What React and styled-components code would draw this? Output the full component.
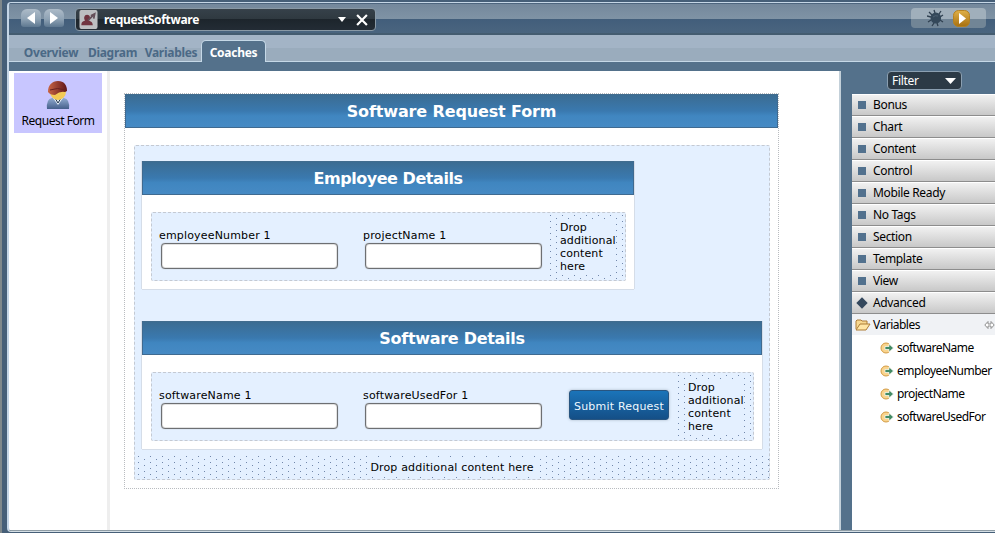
import React from "react";
import styled, { createGlobalStyle, css } from "styled-components";

const Global = createGlobalStyle`
  *{box-sizing:border-box}
  html,body{margin:0;padding:0;height:533px;overflow:hidden;background:#fff}
  body{font-family:"Noto Sans","Open Sans",sans-serif;font-size:12px;color:#000}
  svg{flex:none}
`;

const Desktop = styled.div`
  width:995px;height:533px;overflow:hidden;
  background:linear-gradient(90deg,#7f888b 0 2px,#465f78 2px);
  padding:2px 0 0 7px;
`;
const AppFrame = styled.div`
  height:530px;border:1px solid #c5d6e6;border-right:0;border-left-width:2px;
  border-bottom-color:#d5dfe5;border-radius:4px 0 0 4px;overflow:hidden;background:#54718b;
  display:flex;flex-direction:column;
`;
const TitleBar = styled.header`
  height:32px;flex:none;display:flex;align-items:flex-start;padding:5px 9px 0 12px;
  background:linear-gradient(#4d657e 0 1px,#74889c 1px,#7f93a5 16px,#425e7b 16px,#4a657f 30px,#445c70 30px);
`;
const NavButton = styled.button`
  width:20px;height:18px;padding:0;margin:1px 3px 0 0;border:0;border-radius:6px 6px 3px 3px;
  background:linear-gradient(#adbbc8,#8fa3b5 55%,#5e7890);
  display:flex;align-items:center;justify-content:center;
`;
const DocPicker = styled.div`
  width:301px;height:23px;margin-left:8px;border:1px solid #8999a6;border-radius:4px;
  background:linear-gradient(#36414a,#2f3940 48%,#1d252c 50%,#232c35);
  display:flex;align-items:center;color:#fff;padding:0 7px 0 3px;
`;
const DocName = styled.span`
  flex:1;padding-left:6px;font-weight:700;font-size:12px;line-height:20px;letter-spacing:-0.32px;
`;
const DropArrow = styled.svg`margin-right:10px;`;
const RunTools = styled.div`
  margin-left:auto;width:75px;height:20px;border-radius:4px;
  background:linear-gradient(#a0afbb 0 11px,#718596 11px);
  display:flex;align-items:center;padding-left:16px;gap:9px;
`;
const TabStrip = styled.nav`
  height:27px;flex:none;display:flex;align-items:flex-end;padding-left:9px;
  background:linear-gradient(#a3b4c6 0 13px,#9aacbd 13px);border-bottom:1px solid #c5d8e7;
`;
const Tab = styled.a`
  width:${p => p.$w}px;height:20px;line-height:23px;text-align:center;white-space:nowrap;
  font-size:12px;font-weight:700;letter-spacing:-0.28px;color:#4b6986;
  ${p => p.$active && css`
    height:22px;line-height:23px;color:#fff;background:#54718b;margin-bottom:-1px;
    border:1px solid #c5d8e7;border-bottom:0;border-radius:5px 5px 0 0;
  `}
`;
const Workspace = styled.main`
  flex:1;min-height:0;display:flex;padding-top:9px;border-bottom:1px solid #8f9da6;
`;
const CoachList = styled.aside`
  width:101px;background:#fff;border-right:3px solid #eee;padding:2px 5px;
`;
const CoachItem = styled.div`
  width:88px;height:60px;background:#c8c6ff;display:flex;flex-direction:column;align-items:center;
  padding-top:8px;white-space:nowrap;
`;
const CoachLabel = styled.span`font-size:12px;line-height:17px;margin-top:2px;letter-spacing:-0.48px;`;

const Canvas = styled.section`
  width:731px;background:#fff;border-right:2px solid #c3d0d9;padding:22px 0 0 14px;
  font-family:"DejaVu Sans",sans-serif;font-size:11px;letter-spacing:.17px;
`;
const Form = styled.div`
  width:655px;height:396px;border:1px dotted #b9bcc0;padding-bottom:8px;
`;
const Heading = styled.h2`
  margin:0;height:34px;border:1px solid #3f6a90;border-top-color:#416c8e;
  background:linear-gradient(#3b6c92,#3a79af 50%,#4086c0 65%,#468ac4);
  color:#fff;font-size:16px;font-weight:700;line-height:33px;text-align:center;
  letter-spacing:${p => p.$track}px;
`;
const VerticalGroup = styled.div`
  width:636px;height:335px;margin:17px 0 0 9px;border:1px dashed #c4c9d2;border-radius:2px;
  background:#e4f0ff;padding:15px 7px 0;display:flex;flex-direction:column;align-items:flex-start;
`;
const Section = styled.div`
  width:${p => p.$w}px;height:128px;flex:none;background:#fff;margin-bottom:${p => p.$gap}px;
  box-shadow:-1px 0 #d5dde8,1px 0 #d5dde8,0 1px #d5dde8;
`;
const FieldRow = styled.div`
  margin:17px 8px 0 9px;height:69px;border:1px dashed #c4c9d2;border-radius:2px;
  background:#e4f0ff;display:flex;
`;
const Field = styled.label`
  width:204px;padding:16px 0 0 7px;line-height:13px;display:block;font-size:11px;white-space:nowrap;
  &:first-child{flex:none}
`;
const TextBox = styled.input`
  display:block;width:177px;height:26px;margin:1px 0 0 2px;border:1px solid #6d6f72;border-radius:4px;
  background:#fff;outline:0;box-shadow:inset 0 0 0 1px #e2e2e2,0 0 1px #9a9a9a;
`;
const SubmitButton = styled.button`
  width:100px;height:30px;flex:none;margin:17px 0 0 9px;padding:2px 0 0;border:1px solid #285580;border-radius:3px;
  background:linear-gradient(#1b74b9,#144f87);box-shadow:0 0 3px #a9b7c5;color:#eef8ff;
  font-family:"DejaVu Sans",sans-serif;font-size:11px;letter-spacing:.2px;white-space:nowrap;
`;
const dots = css`
  background-image:
    radial-gradient(circle at ${p => p.$dotX}px 2.5px,#7187ab 0.6px,transparent 0.8px),
    radial-gradient(circle at ${p => p.$dotX + 6}px 5.5px,#7187ab 0.6px,transparent 0.8px);
  background-size:12px 6px;
`;
const DropCell = styled.div`
  width:76px;flex:none;margin-left:auto;padding:7px 8px;${dots}
  span{display:block;width:59px;height:54px;padding:1px 0 0 3px;background:#e4f0ff;line-height:13px;letter-spacing:.1px}
`;
const DropBar = styled.div`
  width:634px;height:25px;margin-left:-7px;display:flex;justify-content:center;align-items:center;${dots}
  span{background:#e4f0ff;padding:2px 2px 0;line-height:14px}
`;

const Palette = styled.aside`
  flex:1;display:flex;flex-direction:column;padding-left:11px;min-width:0;
`;
const FilterButton = styled.button`
  width:75px;height:19px;margin:0 0 4px 35px;padding:0 5px 0 4px;border:1px solid #8b9fb1;border-radius:4px;
  background:#2c3a46;color:#fff;font:12px/15px "Noto Sans",sans-serif;letter-spacing:-.3px;
  display:flex;align-items:center;justify-content:space-between;
`;
const Category = styled.div`
  height:22px;flex:none;display:flex;align-items:center;padding:0 0 1px 6px;gap:7px;
  border-top:1px solid #fff;border-bottom:1px solid #8d8d8d;
  background:linear-gradient(#f1f1f1,#c8c8c8);line-height:18px;letter-spacing:-0.34px;
`;
const Marker = styled.i`
  width:8px;height:8px;background:${p => (p.$open ? "#34485d" : "#52718e")};
  transform:${p => (p.$open ? "rotate(45deg)" : "none")};
`;
const FolderRow = styled.div`
  height:21px;flex:none;background:#f0f2f5;display:flex;align-items:center;padding-left:3px;gap:2px;
  span{flex:1;letter-spacing:-0.5px}
`;
const VariableList = styled.ul`
  flex:1;margin:0;padding:1px 0 0 28px;list-style:none;background:#fff;
`;
const Variable = styled.li`
  height:23px;display:flex;align-items:center;gap:3px;white-space:nowrap;letter-spacing:-0.52px;
`;
const PaletteBody = styled.div`
  flex:1;background:#fff;display:flex;flex-direction:column;min-height:0;
`;

const Triangle = ({ dir }) => (
  <svg width="10" height="12" viewBox="0 0 10 12"><path d={dir === "left" ? "M9 0V12L1 6Z" : "M1 0V12L9 6Z"} fill="#fff" /></svg>
);
const CoachIcon = () => (
  <svg width="19" height="19" viewBox="0 0 19 20">
    <rect width="19" height="20" rx="2" fill="#bdbfc2" />
    <path d="M2 16c0-4 2-4 4-5-2-2-1-6 2-6s4 3 2 6c1 1 4 1 4 5Z" fill="#703440" />
    <path d="M9 11l7-7M12 6l4-2-1 5" stroke="#65505a" strokeWidth="1.8" fill="none" />
  </svg>
);
const BugIcon = () => (
  <svg width="17" height="18" viewBox="0 0 17 18">
    <path d="M5 6L2 3M8 4L7 1M12 5l2-3M4 8L0 7M4 11l-3 2M7 14l-2 3M10 14l1 3M13 11l3 2M13 8l3-2" stroke="#304151" strokeWidth="1.3" />
    <ellipse cx="8.8" cy="9" rx="5.3" ry="5.5" fill="#34485a" /><path d="M6 8q2-2 5-1" stroke="#4d6173" fill="none" />
  </svg>
);
const RunIcon = () => (
  <svg width="17" height="17" viewBox="0 0 17 17">
    <defs><linearGradient id="run" x2="0" y2="1"><stop stopColor="#dfb048" /><stop offset="1" stopColor="#a8700f" /></linearGradient></defs>
    <rect x=".5" y=".5" width="16" height="16" rx="5" fill="url(#run)" stroke="#b58220" /><path d="M6 3l7 5.500L6 14Z" fill="#fff" />
  </svg>
);
const PersonIcon = () => (
  <svg width="24" height="29" viewBox="0 0 24 29">
    <defs>
      <linearGradient id="body" x2="0" y2="1"><stop stopColor="#91abd0" /><stop offset="1" stopColor="#455f8b" /></linearGradient>
      <linearGradient id="cap"><stop stopColor="#c96545" /><stop offset="1" stopColor="#5f1518" /></linearGradient>
    </defs>
    <path d="M1 28q-1-10 5-11h12q6 1 5 11Z" fill="url(#body)" /><path d="M7 17l5 7 5-7Z" fill="#e5edf2" /><path d="M9 17l3 5 3-5" stroke="#24364e" fill="none" />
    <ellipse cx="12" cy="10.500" rx="8" ry="8.500" fill="#f3ca55" />
    <path d="M2 11C2 4 6 0 12 0s9 4 9 10l-2 1q-5-1-10 3-5 0-7-3Z" fill="url(#cap)" /><path d="M4 9q7-3 16 0" stroke="#66221f" fill="none" />
  </svg>
);
const FolderIcon = () => (
  <svg width="16" height="13" viewBox="0 0 16 13">
    <path d="M1 11V3l1-1h4l1 1h5v3" fill="#f7d890" stroke="#ad7d36" /><path d="M1 12L5 6h10l-4 6Z" fill="#ffe6a5" stroke="#ad7d36" />
  </svg>
);
const VariableIcon = () => (
  <svg width="14" height="12" viewBox="0 0 14 12">
    <circle cx="6" cy="6" r="5" fill="#f9d48e" stroke="#d39b42" /><path d="M5 4.500h4V2l4.500 4L9 10V7.500H5Z" fill="#438b65" stroke="#fff" strokeWidth=".7" />
  </svg>
);
const ExpandIcon = () => (
  <svg width="11" height="8" viewBox="0 0 11 8"><path d="M4 .5L.8 4 4 7.500V5H7V7.500L10.2 4 7 .5V3H4Z" fill="#fff" stroke="#8d8d8d" /></svg>
);

const categories = ["Bonus", "Chart", "Content", "Control", "Mobile Ready", "No Tags", "Section", "Template", "View"];
const variables = ["softwareName", "employeeNumber", "projectName", "softwareUsedFor"];

const DropTarget = () => <DropCell $dotX={1.5}><span>Drop<br />additional<br />content<br />here</span></DropCell>;
const InputField = ({ label }) => <Field>{label}<TextBox aria-label={label} /></Field>;

export default function App() {
  return (
    <>
      <Global />
      <Desktop>
        <AppFrame>
          <TitleBar>
            <NavButton aria-label="Back"><Triangle dir="left" /></NavButton>
            <NavButton aria-label="Forward"><Triangle dir="right" /></NavButton>
            <DocPicker>
              <CoachIcon />
              <DocName>requestSoftware</DocName>
              <DropArrow width="8" height="5" viewBox="0 0 8 5"><path d="M0 0h8L4 5Z" fill="#fff" /></DropArrow>
              <svg width="12" height="12" viewBox="0 0 11 11"><path d="M1 1l9 9M10 1L1 10" stroke="#fff" strokeWidth="2" /></svg>
            </DocPicker>
            <RunTools><BugIcon /><RunIcon /></RunTools>
          </TitleBar>
          <TabStrip>
            <Tab $w={66}>Overview</Tab><Tab $w={57}>Diagram</Tab><Tab $w={60}>Variables</Tab><Tab $w={65} $active>Coaches</Tab>
          </TabStrip>
          <Workspace>
            <CoachList><CoachItem><PersonIcon /><CoachLabel>Request Form</CoachLabel></CoachItem></CoachList>
            <Canvas>
              <Form>
                <Heading $track={-0.13}>Software Request Form</Heading>
                <VerticalGroup>
                  <Section $w={492} $gap={32}>
                    <Heading $track={-0.45}>Employee Details</Heading>
                    <FieldRow><InputField label="employeeNumber 1" /><InputField label="projectName 1" /><DropTarget /></FieldRow>
                  </Section>
                  <Section $w={620} $gap={5}>
                    <Heading $track={-0.3}>Software Details</Heading>
                    <FieldRow><InputField label="softwareName 1" /><InputField label="softwareUsedFor 1" /><SubmitButton>Submit Request</SubmitButton><DropTarget /></FieldRow>
                  </Section>
                  <DropBar $dotX={3.5}><span>Drop additional content here</span></DropBar>
                </VerticalGroup>
              </Form>
            </Canvas>
            <Palette>
              <FilterButton>Filter<svg width="11" height="6" viewBox="0 0 11 6"><path d="M0 0h11L5.500 6Z" fill="#fff" /></svg></FilterButton>
              <PaletteBody>
                {categories.map(c => <Category key={c}><Marker />{c}</Category>)}
                <Category><Marker $open />Advanced</Category>
                <FolderRow><FolderIcon /><span>Variables</span><ExpandIcon /></FolderRow>
                <VariableList>{variables.map(v => <Variable key={v}><VariableIcon />{v}</Variable>)}</VariableList>
              </PaletteBody>
            </Palette>
          </Workspace>
        </AppFrame>
      </Desktop>
    </>
  );
}
